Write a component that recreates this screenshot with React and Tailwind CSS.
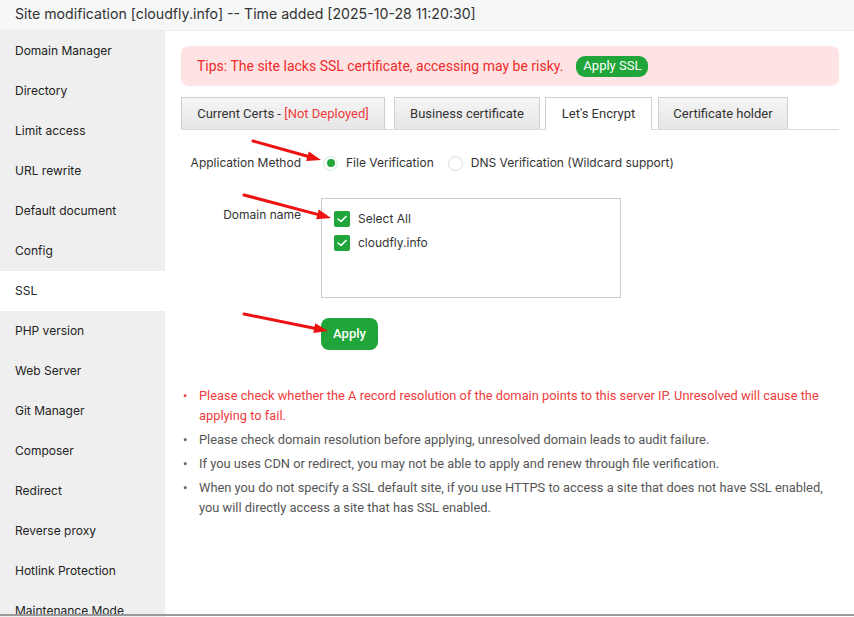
import React from "react";

const sidebar = [
  "Domain Manager",
  "Directory",
  "Limit access",
  "URL rewrite",
  "Default document",
  "Config",
  "SSL",
  "PHP version",
  "Web Server",
  "Git Manager",
  "Composer",
  "Redirect",
  "Reverse proxy",
  "Hotlink Protection",
  "Maintenance Mode",
];

function Check() {
  return (
    <span className="w-4 h-4 rounded-[2px] bg-[#20a53a] flex items-center justify-center shrink-0">
      <svg width="10" height="8" viewBox="0 0 10 8" fill="none">
        <path d="M1 4 L4 6.5 L9 1.5" stroke="white" strokeWidth="1.6" strokeLinecap="round" strokeLinejoin="round" />
      </svg>
    </span>
  );
}

function Arrow({ x1, y1, x2, y2 }) {
  const dx = x2 - x1;
  const dy = y2 - y1;
  const len = Math.sqrt(dx * dx + dy * dy);
  const ux = dx / len;
  const uy = dy / len;
  const hl = 14;
  const hw = 5;
  const bx = x2 - ux * hl;
  const by = y2 - uy * hl;
  const p1 = `${bx - uy * hw},${by + ux * hw}`;
  const p2 = `${bx + uy * hw},${by - ux * hw}`;
  return (
    <g>
      <line x1={x1} y1={y1} x2={bx} y2={by} stroke="#ee1111" strokeWidth="3" strokeLinecap="round" />
      <polygon points={`${x2},${y2} ${p1} ${p2}`} fill="#ee1111" />
    </g>
  );
}

export default function App() {
  return (
    <div
      className="relative w-[854px] h-[617px] overflow-hidden bg-white flex flex-col text-[#333]"
      style={{ fontFamily: "Inter, 'Noto Sans', sans-serif" }}
    >
      <div className="h-[31px] shrink-0 bg-[#f6f7f7] border-b border-[#ececec] flex items-center px-[15px] text-[14.15px] text-[#333] pb-[2px]">
        Site modification [cloudfly.info] -- Time added [2025-10-28 11:20:30]
      </div>
      <div className="flex flex-1 min-h-0">
        <div className="w-[165px] shrink-0 bg-[#efefef] flex flex-col">
          {sidebar.map((s) => (
            <div
              key={s}
              className={`h-10 shrink-0 flex items-center px-[15px] text-[12px] text-[#222] ${
                s === "SSL" ? "bg-white" : ""
              }`}
            >
              {s}
            </div>
          ))}
        </div>
        <div
          className="flex-1 pl-4 pr-[15px] pt-[15px]"
          style={{ fontFamily: "Roboto, 'Liberation Sans', sans-serif" }}
        >
          <div className="h-[40px] rounded-lg bg-[#fde3e3] flex items-center px-4 text-[14px] text-[#ef2b2b]">
            <span>Tips: The site lacks SSL certificate, accessing may be risky.</span>
            <span className="ml-[13px] h-[21px] px-[7px] rounded-[9px] bg-[#20a53a] text-white text-[13px] flex items-center">
              Apply SSL
            </span>
          </div>

          <div className="mt-[12px] flex items-end border-b border-[#dcdcdc] h-[32px] gap-[7px]">
            <div className="h-[32px] w-[204px] border border-[#cfcfcf] border-b-0 bg-gradient-to-b from-[#f5f5f5] to-[#e6e6e6] flex items-center justify-center text-[13px] text-[#333]">
              Current Certs -&nbsp;<span className="text-[#ef3b3b]">[Not Deployed]</span>
            </div>
            <div className="h-[32px] w-[146px] border border-[#cfcfcf] border-b-0 bg-gradient-to-b from-[#f5f5f5] to-[#e6e6e6] flex items-center justify-center text-[13px] text-[#333] ml-[2px]">
              Business certificate
            </div>
            <div className="h-[33px] -mb-px w-[107px] border border-[#cfcfcf] border-b-0 bg-white flex items-center justify-center text-[13px] text-[#333] ml-[-2px]">
              Let's Encrypt
            </div>
            <div className="h-[32px] w-[130px] border border-[#cfcfcf] border-b-0 bg-gradient-to-b from-[#f5f5f5] to-[#e6e6e6] flex items-center justify-center text-[13px] text-[#333] ml-[-1px]">
              Certificate holder
            </div>
          </div>

          <div className="mt-[23px] flex items-center h-[20px] text-[12px] text-[#333]" style={{ fontFamily: "Inter, sans-serif" }}>
            <div className="w-[140px] pr-5 text-right">Application Method</div>
            <span className="ml-[2px] w-[15px] h-[15px] rounded-full border border-[#cdeed3] flex items-center justify-center">
              <span className="w-[8px] h-[8px] rounded-full bg-[#20a53a]" />
            </span>
            <span className="ml-[8px]">File Verification</span>
            <span className="ml-[14px] w-[15px] h-[15px] rounded-full border border-[#dddddd]" />
            <span className="ml-[8px]">DNS Verification (Wildcard support)</span>
          </div>

          <div className="mt-[25px] flex items-start text-[12px] text-[#333]" style={{ fontFamily: "Inter, sans-serif" }}>
            <div className="w-[140px] pr-5 text-right pt-[8px]">Domain name</div>
            <div className="w-[300px] h-[100px] border border-[#cccccc] pt-[12px] pl-[12px] flex flex-col gap-[8px]">
              <div className="flex items-center gap-[8px] h-[16px]">
                <Check />
                <span>Select All</span>
              </div>
              <div className="flex items-center gap-[8px] h-[16px]">
                <Check />
                <span>cloudfly.info</span>
              </div>
            </div>
          </div>

          <div className="mt-[20px] pl-[140px]">
            <button className="h-[32px] w-[57px] rounded-[8px] bg-[#20a53a] text-white text-[13px] font-medium flex items-center justify-center">
              Apply
            </button>
          </div>

          <ul className="mt-[36px] text-[12.85px] leading-[20px] text-[#555] flex flex-col gap-[4px]">
            <li className="flex text-[#ef3b3b]">
              <span className="w-[18px] shrink-0 pl-[2px]">•</span>
              <span>Please check whether the A record resolution of the domain points to this server IP. Unresolved will cause the applying to fail.</span>
            </li>
            <li className="flex">
              <span className="w-[18px] shrink-0 pl-[2px]">•</span>
              <span>Please check domain resolution before applying, unresolved domain leads to audit failure.</span>
            </li>
            <li className="flex">
              <span className="w-[18px] shrink-0 pl-[2px]">•</span>
              <span>If you uses CDN or redirect, you may not be able to apply and renew through file verification.</span>
            </li>
            <li className="flex">
              <span className="w-[18px] shrink-0 pl-[2px]">•</span>
              <span>When you do not specify a SSL default site, if you use HTTPS to access a site that does not have SSL enabled, you will directly access a site that has SSL enabled.</span>
            </li>
          </ul>
        </div>
      </div>
      <div className="absolute left-0 right-0 bottom-[1px] h-[2px] bg-[#9a9a9a]" />

      <svg className="absolute left-0 top-0 pointer-events-none" width="854" height="617">
        <Arrow x1={253} y1={141} x2={321} y2={160} />
        <Arrow x1={244} y1={195} x2={331} y2={218} />
        <Arrow x1={244} y1={314} x2={328} y2={331} />
      </svg>
    </div>
  );
}
